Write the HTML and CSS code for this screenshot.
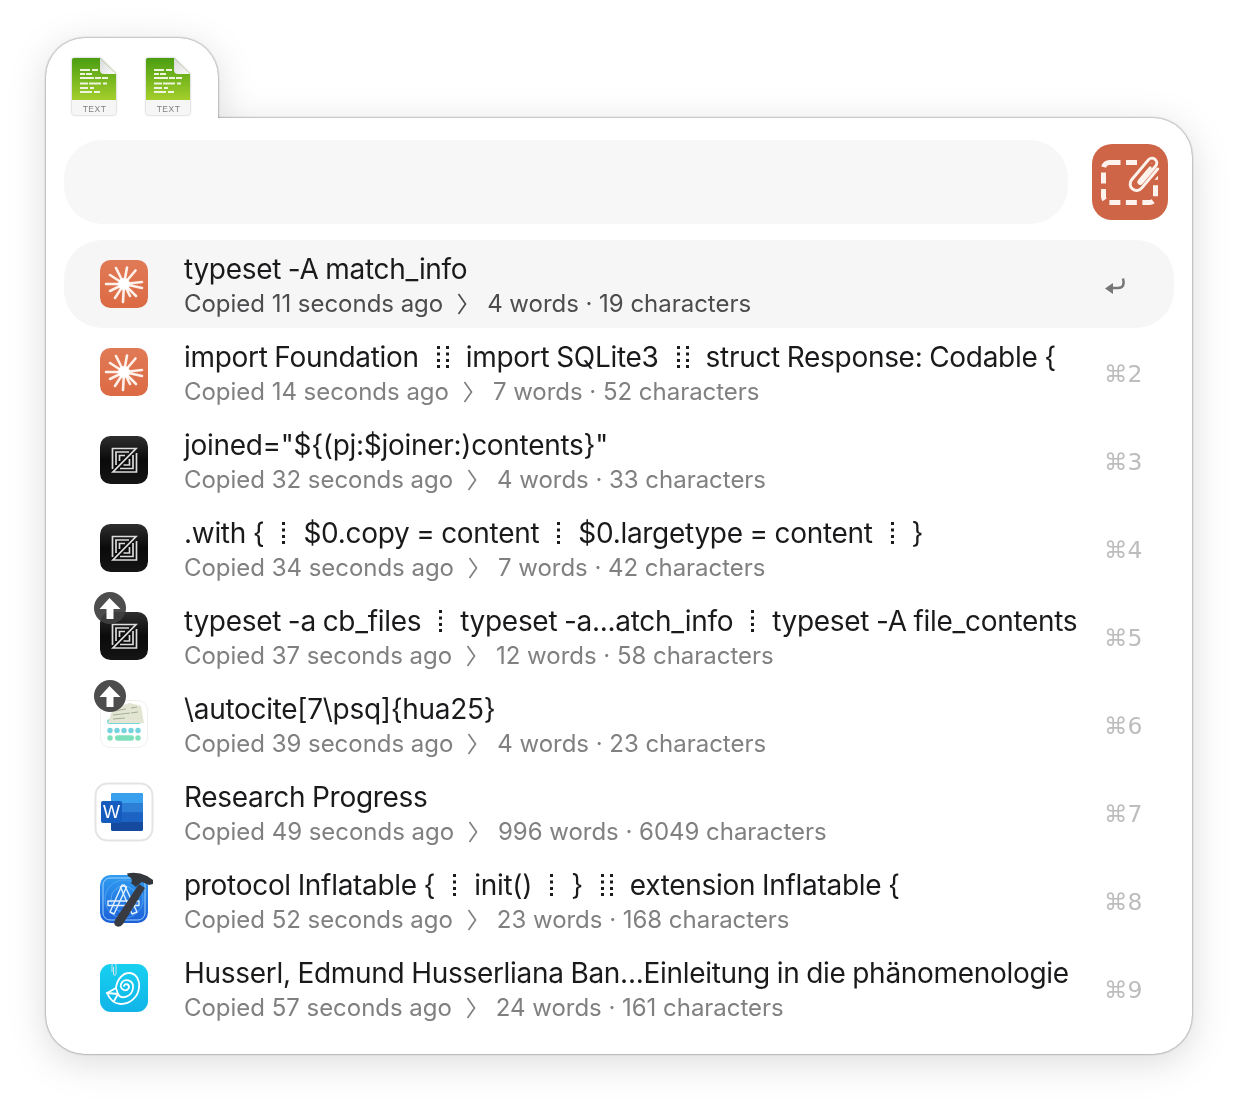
FILE: index.html
```html
<!DOCTYPE html>
<html lang="en">
<head>
<meta charset="utf-8">
<title>Clipboard</title>
<link rel="stylesheet" href="styles.css">
</head>
<body>
<svg class="defs" width="0" height="0" aria-hidden="true">
  <defs>
    <linearGradient id="gGreen" x1="0" y1="0" x2="0" y2="1"><stop offset="0" stop-color="#4a9d12"/><stop offset="1" stop-color="#a4cf2c"/></linearGradient>
    <linearGradient id="gFold" x1="0" y1="0" x2="1" y2="1"><stop offset="0" stop-color="#d8d8d8"/><stop offset="1" stop-color="#fbfbfb"/></linearGradient>
    <linearGradient id="gOrange" x1="0" y1="0" x2="0" y2="1"><stop offset="0" stop-color="#e07a56"/><stop offset="1" stop-color="#dc6a44"/></linearGradient>
    <linearGradient id="gBlack" x1="0" y1="0" x2="0" y2="1"><stop offset="0" stop-color="#2e2e2e"/><stop offset=".5" stop-color="#0a0a0a"/><stop offset="1" stop-color="#151515"/></linearGradient>
    <linearGradient id="gBlue" x1="0" y1="0" x2="0" y2="1"><stop offset="0" stop-color="#2f9cf0"/><stop offset="1" stop-color="#1c5fd8"/></linearGradient>
    <linearGradient id="gCyan" x1="0" y1="0" x2="0" y2="1"><stop offset="0" stop-color="#18d0f0"/><stop offset="1" stop-color="#10b4e8"/></linearGradient>
    <symbol id="doc" viewBox="0 0 46 60">
      <path d="M3 1H29L45 17V43H1V3Q1 1 3 1Z" fill="url(#gGreen)"/>
      <path d="M1 43H45V55Q45 58 42 58H4Q1 58 1 55Z" fill="#f6f6f6"/>
      <path d="M29 1L45 17H33Q29 17 29 13Z" fill="url(#gFold)"/>
      <g fill="#eef4de">
        <rect x="9" y="12" width="10" height="2"/><rect x="21" y="12" width="6" height="2"/>
        <rect x="9" y="16" width="5" height="2"/><rect x="15" y="16" width="6" height="2"/>
        <rect x="9" y="20" width="14" height="2"/><rect x="24" y="20" width="6" height="2"/><rect x="31" y="20" width="6" height="2"/>
        <rect x="9" y="25.500" width="8" height="2"/><rect x="18" y="25.500" width="12" height="2"/><rect x="32" y="25.500" width="4" height="2"/>
        <rect x="9" y="30" width="8" height="2"/><rect x="19" y="30" width="4" height="2"/>
        <rect x="9" y="34" width="12" height="2"/><rect x="23" y="34" width="6" height="2"/>
      </g>
    </symbol>
    <symbol id="spark" viewBox="0 0 48 48">
      <rect width="48" height="48" rx="10.500" fill="url(#gOrange)"/>
      <g stroke="#fff1ea" stroke-width="2.600" stroke-linecap="round">
        <path d="M24 24L16 8M24 24L27 7.500M24 24L35.500 10.500M24 24L42 22M24 24L42 28M24 24L36 36M24 24L30 36M24 24L23 42M24 24L15 38M24 24L10 31M24 24L6 24M24 24L10 15"/>
      </g>
      <circle cx="24" cy="24" r="6" fill="#fff"/>
    </symbol>
    <symbol id="zed" viewBox="0 0 48 48">
      <rect width="48" height="48" rx="10.500" fill="url(#gBlack)"/>
      <g fill="none" stroke="#dcdcdc" stroke-width="1.700">
        <path d="M12.500 33V12.500H36L13 36H36.500V17"/>
        <path d="M16 29V16H29"/>
        <path d="M33 19V32.500H20"/>
        <path d="M19.500 25V19.500H25"/>
        <path d="M29.500 23V29H23.500"/>
      </g>
    </symbol>
    <symbol id="keys" viewBox="0 0 48 48">
      <rect x=".5" y=".5" width="47" height="47" rx="10" fill="#fff" stroke="#efefef"/>
      <rect x="7" y="19" width="34" height="5" rx="2.500" fill="#7ad7d7"/>
      <path d="M8 23L13 8L30 3L41 6L44 23Z" fill="#e1e5d2"/>
      <path d="M14 11l12-2M13 15l17-2M13 19l12-1M31 8l6-1M31 13l7-1" stroke="#a5ae9c" stroke-width="1" fill="none"/>
      <g fill="#74d3dc"><circle cx="10" cy="30.500" r="2.700"/><circle cx="17" cy="30.500" r="2.700"/><circle cx="24" cy="30.500" r="2.700"/><circle cx="31" cy="30.500" r="2.700"/><circle cx="38" cy="30.500" r="2.700"/></g>
      <g fill="#7fe0bc"><circle cx="10" cy="38" r="2.700"/><rect x="15" y="35.300" width="19" height="5.400" rx="2.700"/><circle cx="38" cy="38" r="2.700"/></g>
    </symbol>
    <symbol id="word" viewBox="0 0 60 60">
      <rect x="1.500" y="1.500" width="57" height="57" rx="12" fill="#fff" stroke="#e4e4e4" stroke-width="2"/>
      <rect x="17" y="11" width="32" height="38" rx="2" fill="#1a5cbf"/>
      <path d="M19 11H47Q49 11 49 13V21H17V13Q17 11 19 11Z" fill="#38a0ec"/>
      <rect x="17" y="21" width="32" height="9.500" fill="#2d7fd6"/>
      <rect x="17" y="30.500" width="32" height="9.500" fill="#1c63c4"/>
      <path d="M17 40H49V47Q49 49 47 49H19Q17 49 17 47Z" fill="#164a9e"/>
      <rect x="7" y="19" width="21" height="22" rx="2" fill="#155bbd"/>
      <text class="word-w" x="17.500" y="36">W</text>
    </symbol>
    <symbol id="xcode" viewBox="0 0 58 58">
      <rect x="5" y="4" width="48" height="48" rx="10.500" fill="url(#gBlue)"/>
      <rect x="8" y="7" width="42" height="42" rx="7" fill="none" stroke="#9fd2fa" stroke-width="1"/>
      <circle cx="29" cy="28" r="13" fill="none" stroke="#6ab7f5" stroke-width=".7"/>
      <circle cx="29" cy="28" r="19" fill="none" stroke="#5aaef2" stroke-width=".7"/>
      <g fill="none" stroke="#e2f1ff" stroke-width="1.400" stroke-linejoin="round">
        <path d="M15 41L27 14L31.500 16L19 43Z"/>
        <path d="M42 41L29.500 14L25.500 16L37 43Z"/>
        <path d="M13 30H44V34.500H13Z"/>
      </g>
      <path d="M44 13L50 17L28 53Q25 57 21 55Q18 53 20 49Z" fill="#383c42"/>
      <path d="M32 2.500Q42 0 52 5L58 9V13L54 14L47 11Q43 13 41 16L36 12Q39 8 33 5Z" fill="#34373c"/>
    </symbol>
    <symbol id="shell" viewBox="0 0 48 48">
      <rect width="48" height="48" rx="11" fill="url(#gCyan)"/>
      <path d="M12 8V1a2 2 0 0 1 4 0V10a1.200 1.200 0 0 1-2.500 0V3" fill="none" stroke="#cfe6ea" stroke-width="1"/>
      <g fill="none" stroke="#fff" stroke-width="1.800" stroke-linecap="round" stroke-linejoin="round">
        <path d="M7 29L16 24C17 15 23 9 29 9C36 9 40 16 39 24C38 33 30 40 21 40C15 40 10 36 7 29Z"/>
        <path d="M16 24L18 30L14 37M7 29L18 30"/>
        <path d="M18 30C21 36 32 33 33 24C34 16 24 13 21 20C19 26 28 29 29 23C29 20 25 19 24 22"/>
      </g>
    </symbol>
    <symbol id="one" viewBox="0 0 3 24"><g fill="#1c1c1e"><rect y="1" width="3" height="3"/><rect y="7.500" width="3" height="3"/><rect y="14" width="3" height="3"/><rect y="20" width="3" height="3"/></g></symbol>
    <symbol id="two" viewBox="0 0 12 24"><g fill="#1c1c1e"><rect y="1" width="3" height="3"/><rect y="7.500" width="3" height="3"/><rect y="14" width="3" height="3"/><rect y="20" width="3" height="3"/><rect x="9" y="1" width="3" height="3"/><rect x="9" y="7.500" width="3" height="3"/><rect x="9" y="14" width="3" height="3"/><rect x="9" y="20" width="3" height="3"/></g></symbol>
    <symbol id="chev" viewBox="0 0 10 24"><path d="M1.500 2L8.500 12L1.500 22" fill="none" stroke="currentColor" stroke-width="1.700"/></symbol>
    <symbol id="up" viewBox="0 0 32 32"><circle cx="16" cy="16" r="16" fill="#404040" fill-opacity=".93"/><path d="M16 6L27 17H20V27H13V17H6Z" fill="#fff" transform="translate(-.5 0)"/></symbol>
  </defs>
</svg>

<main class="window">
  <div class="tab">
    <div class="doc"><svg class="doc-art"><use href="#doc"/></svg><span class="doc-label">TEXT</span></div>
    <div class="doc"><svg class="doc-art"><use href="#doc"/></svg><span class="doc-label">TEXT</span></div>
  </div>
  <section class="panel">
    <div class="search-row">
      <div class="search"></div>
      <div class="clip-btn">
        <svg viewBox="0 0 76 76" width="76" height="76">
          <rect x="11.500" y="18.500" width="52" height="40" rx="6" fill="none" stroke="#fdf3ec" stroke-width="5" stroke-dasharray="11 5.500"/>
          <g transform="translate(53 30) rotate(40)" fill="none" stroke-linecap="round">
            <path d="M6.500 -12V13A6.500 6.500 0 0 1 -6.500 13V-13A4.700 4.700 0 0 1 3 -13V9A1.500 1.500 0 0 1 0 9V-8" stroke="#cf6547" stroke-width="9"/>
            <path d="M6.500 -12V13A6.500 6.500 0 0 1 -6.500 13V-13A4.700 4.700 0 0 1 3 -13V9A1.500 1.500 0 0 1 0 9V-8" stroke="#fdf3ec" stroke-width="3"/>
          </g>
        </svg>
      </div>
    </div>
    <ol class="list">
      <li class="row active">
        <svg class="ico"><use href="#spark"/></svg>
        <div class="text">
          <div class="title">typeset -A match_info</div>
          <div class="sub">Copied 11 seconds ago<svg class="chev"><use href="#chev"/></svg>4 words · 19 characters</div>
        </div>
        <svg class="enter" viewBox="0 0 22 18" width="22" height="18"><path d="M19 1.500Q21.500 11 14 11H5" fill="none" stroke="#777" stroke-width="2.400"/><path d="M1 11.500L9 6V17Z" fill="#777"/></svg>
      </li>
      <li class="row">
        <svg class="ico"><use href="#spark"/></svg>
        <div class="text">
          <div class="title">import Foundation<svg class="sep2"><use href="#two"/></svg>import SQLite3<svg class="sep2"><use href="#two"/></svg>struct Response: Codable {</div>
          <div class="sub dim">Copied 14 seconds ago<svg class="chev"><use href="#chev"/></svg>7 words · 52 characters</div>
        </div>
        <span class="key">⌘2</span>
      </li>
      <li class="row">
        <svg class="ico"><use href="#zed"/></svg>
        <div class="text">
          <div class="title">joined="${(pj:$joiner:)contents}"</div>
          <div class="sub dim">Copied 32 seconds ago<svg class="chev"><use href="#chev"/></svg>4 words · 33 characters</div>
        </div>
        <span class="key">⌘3</span>
      </li>
      <li class="row">
        <svg class="ico"><use href="#zed"/></svg>
        <div class="text">
          <div class="title">.with {<svg class="sep1"><use href="#one"/></svg>$0.copy = content<svg class="sep1"><use href="#one"/></svg>$0.largetype = content<svg class="sep1"><use href="#one"/></svg>}</div>
          <div class="sub dim">Copied 34 seconds ago<svg class="chev"><use href="#chev"/></svg>7 words · 42 characters</div>
        </div>
        <span class="key">⌘4</span>
      </li>
      <li class="row">
        <span class="ico-wrap"><svg class="ico"><use href="#zed"/></svg><svg class="badge"><use href="#up"/></svg></span>
        <div class="text">
          <div class="title">typeset -a cb_files<svg class="sep1"><use href="#one"/></svg>typeset -a...atch_info<svg class="sep1"><use href="#one"/></svg>typeset -A file_contents</div>
          <div class="sub dim">Copied 37 seconds ago<svg class="chev"><use href="#chev"/></svg>12 words · 58 characters</div>
        </div>
        <span class="key">⌘5</span>
      </li>
      <li class="row">
        <span class="ico-wrap"><svg class="ico"><use href="#keys"/></svg><svg class="badge"><use href="#up"/></svg></span>
        <div class="text">
          <div class="title">\autocite[7\psq]{hua25}</div>
          <div class="sub dim">Copied 39 seconds ago<svg class="chev"><use href="#chev"/></svg>4 words · 23 characters</div>
        </div>
        <span class="key">⌘6</span>
      </li>
      <li class="row">
        <svg class="ico ico-word"><use href="#word"/></svg>
        <div class="text">
          <div class="title">Research Progress</div>
          <div class="sub dim">Copied 49 seconds ago<svg class="chev"><use href="#chev"/></svg>996 words · 6049 characters</div>
        </div>
        <span class="key">⌘7</span>
      </li>
      <li class="row">
        <svg class="ico ico-xcode"><use href="#xcode"/></svg>
        <div class="text">
          <div class="title">protocol Inflatable {<svg class="sep1"><use href="#one"/></svg>init()<svg class="sep1"><use href="#one"/></svg>}<svg class="sep2"><use href="#two"/></svg>extension Inflatable {</div>
          <div class="sub dim">Copied 52 seconds ago<svg class="chev"><use href="#chev"/></svg>23 words · 168 characters</div>
        </div>
        <span class="key">⌘8</span>
      </li>
      <li class="row">
        <svg class="ico"><use href="#shell"/></svg>
        <div class="text">
          <div class="title">Husserl, Edmund Husserliana Ban...Einleitung in die phänomenologie</div>
          <div class="sub dim">Copied 57 seconds ago<svg class="chev"><use href="#chev"/></svg>24 words · 161 characters</div>
        </div>
        <span class="key">⌘9</span>
      </li>
    </ol>
  </section>
</main>
</body>
</html>
```

FILE: styles.css
```css
* { box-sizing: border-box; }
html, body { margin: 0; padding: 0; background: #fff; }
body { width: 1238px; height: 1108px; overflow: hidden; font-family: Inter, "Noto Sans", "Liberation Sans", sans-serif; color: #1a1a1c; }
.defs { position: absolute; }
.window {
  width: 1146px;
  margin: 38px 0 0 46px;
  filter: drop-shadow(0 0 .8px rgba(0,0,0,.55)) drop-shadow(0 8px 18px rgba(0,0,0,.14));
}
.tab {
  width: 172px;
  height: 80px;
  background: #fff;
  border-radius: 39px 39px 0 0;
  padding: 19px 0 0 25px;
  display: flex;
  gap: 28px;
}
.doc { position: relative; width: 46px; height: 60px; }
.doc-art { display: block; width: 46px; height: 60px; filter: drop-shadow(0 .5px 1px rgba(0,0,0,.3)); }
.doc-label { position: absolute; left: 1px; right: 0; top: 47px; text-align: center; font-size: 8.5px; line-height: 10px; letter-spacing: .5px; color: #808080; font-family: "Liberation Sans", sans-serif; }
.panel {
  height: 936px;
  background: #fff;
  border-radius: 0 39px 39px 39px;
  padding: 22px 18px 22px 18px;
}
.search-row { display: flex; align-items: center; gap: 24px; padding-right: 6px; margin-bottom: 16px; }
.search { flex: 1; height: 84px; background: #f7f7f7; border-radius: 38px; }
.clip-btn { width: 76px; height: 76px; background: #cf6547; border-radius: 20px; overflow: hidden; }
.clip-btn svg { display: block; }
.list { list-style: none; margin: 0; padding: 0; }
.row { height: 88px; display: flex; align-items: center; padding: 0 32px 0 36px; border-radius: 38px; }
.row.active { background: #f6f6f6; }
.ico { display: block; width: 48px; height: 48px; flex: none; overflow: visible; }
.ico-word { width: 60px; height: 60px; margin: 0 -6px; }
.ico-xcode { width: 58px; height: 58px; margin: 0 -5px; }
.ico-wrap { position: relative; display: block; width: 48px; height: 48px; flex: none; }
.badge { position: absolute; left: -6px; top: -20px; width: 32px; height: 32px; }
.text { flex: 1; min-width: 0; margin-left: 36px; padding-top: 3px; }
.title { font-size: 28px; letter-spacing: -.3px; word-spacing: -.8px; line-height: 36px; white-space: nowrap; color: #1a1a1c; display: flex; align-items: center; height: 36px; }
.sub { font-size: 24px; letter-spacing: -.03px; line-height: 34px; white-space: nowrap; color: #4c4c4e; display: flex; align-items: center; height: 34px; }
.sub.dim { color: #808082; }
.chev { width: 10px; height: 24px; margin: 0 20px 0 14px; flex: none; color: inherit; }
.sep1 { width: 3px; height: 24px; margin: 0 18px; flex: none; }
.sep2 { width: 12px; height: 24px; margin: 0 17px 0 18px; flex: none; }
.key { width: 38px; flex: none; font-size: 23.5px; line-height: 30px; padding-top: 4px; height: 34px; color: #bdbdbd; font-family: "DejaVu Sans", Inter, sans-serif; white-space: nowrap; }
.enter { flex: none; margin-right: 16px; margin-top: 4px; }
.word-w { font-family: "Liberation Sans", sans-serif; font-size: 18px; fill: #fff; text-anchor: middle; }
```
